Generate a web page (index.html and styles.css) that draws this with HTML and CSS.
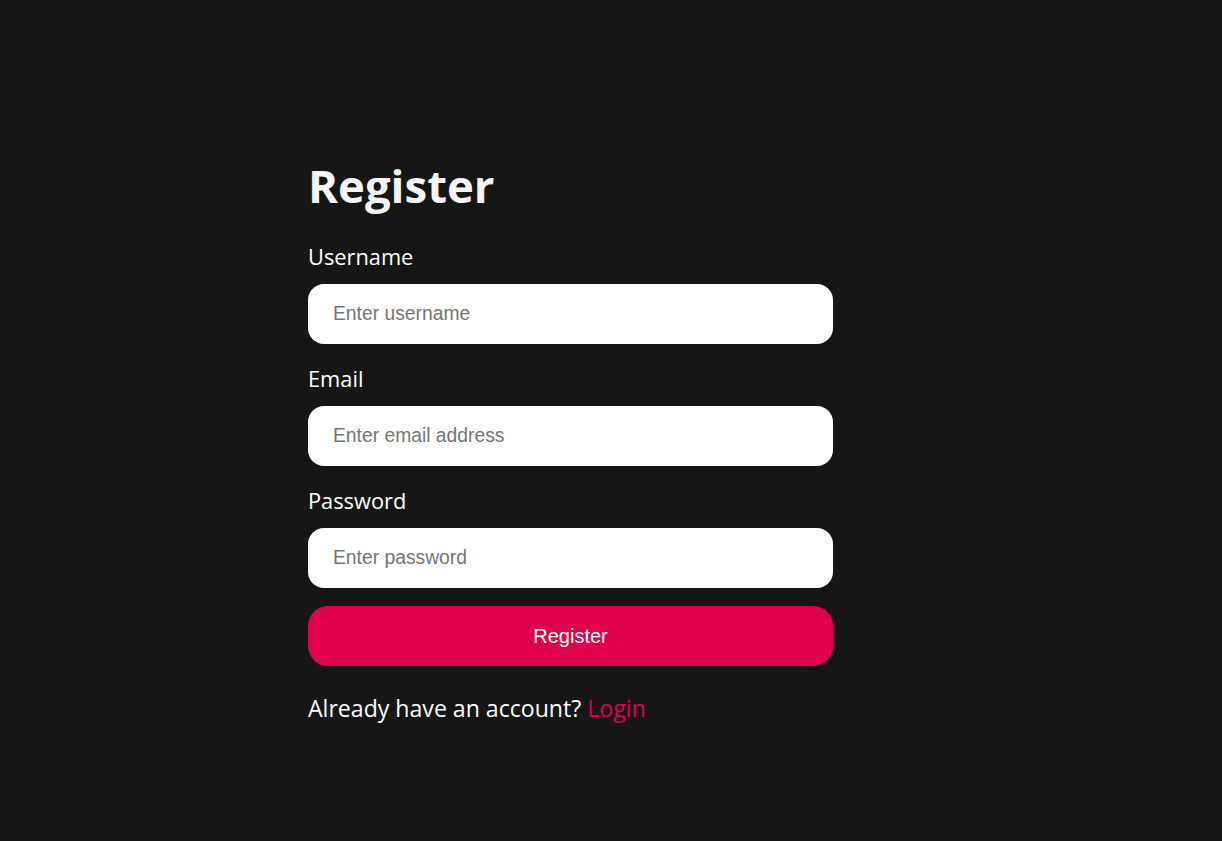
FILE: index.html
```html
<!DOCTYPE html>
<html>
<head>
<meta charset="utf-8">
<link rel="stylesheet" href="styles.css">
</head>
<body>
<main class="page">
  <form class="form">
    <h1 class="title">Register</h1>
    <label class="label first">Username</label>
    <input class="field" type="text" placeholder="Enter username">
    <label class="label">Email</label>
    <input class="field" type="email" placeholder="Enter email address">
    <label class="label">Password</label>
    <input class="field" type="password" placeholder="Enter password">
    <button class="btn" type="button">Register</button>
    <p class="switch">Already have an account? <a class="link" href="#">Login</a></p>
  </form>
</main>
</body>
</html>
```
FILE: styles.css
```css
html, body {
  margin: 0;
  padding: 0;
  background: #161616;
  height: 100%;
}
.page {
  padding-top: 155px;
  padding-left: 308px;
}
.form {
  width: 525px;
  display: flex;
  flex-direction: column;
  font-family: "Open Sans", "Noto Sans", sans-serif;
  color: #ffffff;
}
.title {
  margin: 0;
  font-size: 45.5px;
  line-height: 60px;
  font-weight: 700;
  color: #f4f4f4;
  height: 60px;
}
.label {
  display: block;
  font-size: 21.8px;
  line-height: 30px;
  margin: 20px 0 12px;
  color: #ffffff;
}
.label.first {
  margin-top: 27px;
}
.field {
  box-sizing: border-box;
  height: 60px;
  width: 100%;
  border: none;
  border-radius: 16px;
  background: #ffffff;
  padding: 0 25px;
  font-family: "Liberation Sans", Arial, sans-serif;
  font-size: 19.3px;
  color: #222;
  outline: none;
}
.field::placeholder {
  color: #757575;
}
.btn {
  margin-top: 18px;
  height: 60px;
  width: 100%;
  border: none;
  border-radius: 20px;
  background: #e0004d;
  color: #ffffff;
  font-family: "Liberation Sans", Arial, sans-serif;
  font-size: 20px;
}
.switch {
  margin: 27px 0 0;
  font-size: 23.1px;
  line-height: 30px;
}
.link {
  color: #e0004d;
  text-decoration: none;
}
```
